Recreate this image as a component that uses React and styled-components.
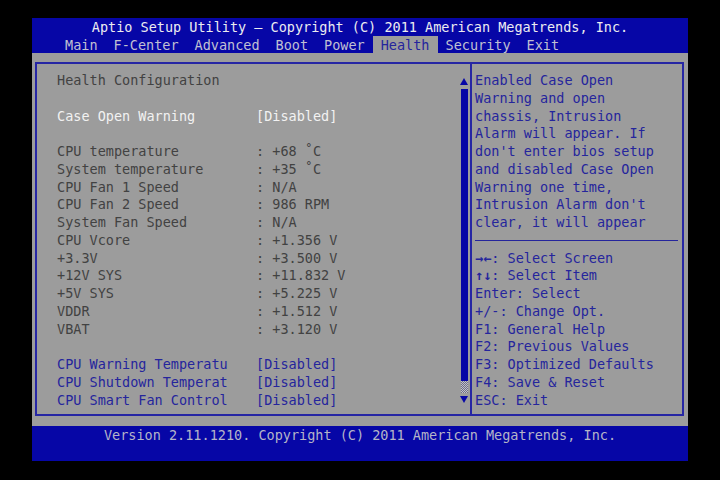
import React from 'react';
import styled, { createGlobalStyle } from 'styled-components';

const GlobalStyle = createGlobalStyle`
  html, body {
    margin: 0;
    padding: 0;
    background: #000;
  }
  body {
    width: 720px;
    height: 480px;
    overflow: hidden;
    font-family: "DejaVu Sans Mono", "Liberation Mono", monospace;
    font-size: 13.5px;
  }
`;

const BLUE = '#0606a6';
const GRAY = '#9c9c9c';
const INK = '#424242';
const NAVY = '#25259c';

const menu = ['Main', 'F-Center', 'Advanced', 'Boot', 'Power', 'Health', 'Security', 'Exit'];

const readings = [
  ['CPU temperature', '+68 ˚C'],
  ['System temperature', '+35 ˚C'],
  ['CPU Fan 1 Speed', 'N/A'],
  ['CPU Fan 2 Speed', '986 RPM'],
  ['System Fan Speed', 'N/A'],
  ['CPU Vcore', '+1.356 V'],
  ['+3.3V', '+3.500 V'],
  ['+12V SYS', '+11.832 V'],
  ['+5V SYS', '+5.225 V'],
  ['VDDR', '+1.512 V'],
  ['VBAT', '+3.120 V'],
];

const options = ['CPU Warning Temperatu', 'CPU Shutdown Temperat', 'CPU Smart Fan Control'];

const helpText = [
  'Enabled Case Open',
  'Warning and open',
  'chassis, Intrusion',
  'Alarm will appear. If',
  "don't enter bios setup",
  'and disabled Case Open',
  'Warning one time,',
  "Intrusion Alarm don't",
  'clear, it will appear',
];

const keys = [
  ['→←', ': Select Screen'],
  ['↑↓', ': Select Item'],
  ['', 'Enter: Select'],
  ['', '+/-: Change Opt.'],
  ['', 'F1: General Help'],
  ['', 'F2: Previous Values'],
  ['', 'F3: Optimized Defaults'],
  ['', 'F4: Save & Reset'],
  ['', 'ESC: Exit'],
];

function App() {
  return (
    <>
      <GlobalStyle />
      <Screen>
        <Header>
          <Title>Aptio Setup Utility – Copyright (C) 2011 American Megatrends, Inc.</Title>
          <Menu>
            {menu.map(m => (
              <Tab key={m} active={m === 'Health'}>{m}</Tab>
            ))}
          </Menu>
        </Header>
        <Body>
          <Panels>
            <MainPanel>
              <Content>
                <Row><Label>Health Configuration</Label></Row>
                <Blank />
                <Row tone="white"><Label>Case Open Warning</Label><Value>[Disabled]</Value></Row>
                <Blank />
                {readings.map(([k, v]) => (
                  <Row key={k}><Label>{k}</Label><Value>: {v}</Value></Row>
                ))}
                <Blank />
                {options.map(o => (
                  <Row key={o} tone="blue"><Label>{o}</Label><Value>[Disabled]</Value></Row>
                ))}
              </Content>
              <ScrollBar>
                <Arrow viewBox="0 0 8 7"><polygon points="4,0 8,7 0,7" /></Arrow>
                <Track>
                  <Thumb />
                  <Dither />
                </Track>
                <Arrow viewBox="0 0 8 7"><polygon points="0,0 8,0 4,7" /></Arrow>
              </ScrollBar>
            </MainPanel>
            <HelpPanel>
              {helpText.map(t => <HelpLine key={t}>{t}</HelpLine>)}
              <Divider />
              {keys.map(([k, t]) => (
                <HelpLine key={t}>{k && <KeyGlyph>{k}</KeyGlyph>}{t}</HelpLine>
              ))}
            </HelpPanel>
          </Panels>
        </Body>
        <Footer>Version 2.11.1210. Copyright (C) 2011 American Megatrends, Inc.</Footer>
      </Screen>
    </>
  );
}

export default App;

const Screen = styled.div`
  margin: 18px 0 0 32px;
  width: 656px;
  height: 443px;
  display: flex;
  flex-direction: column;
`;

const Header = styled.div`
  background: ${BLUE};
  height: 35px;
  display: flex;
  flex-direction: column;
`;

const Title = styled.div`
  height: 18px;
  line-height: 19px;
  text-align: center;
  color: #ececf0;
  white-space: pre;
`;

const Menu = styled.div`
  height: 17px;
  display: flex;
  padding-left: 25px;
`;

const Tab = styled.div`
  line-height: 18px;
  padding: 0 8px;
  white-space: pre;
  color: ${p => (p.active ? NAVY : '#c0c0d2')};
  background: ${p => (p.active ? GRAY : 'transparent')};
`;

const Body = styled.div`
  background: ${GRAY};
  height: 373px;
  padding: 9px 4px 10px 3px;
  box-sizing: border-box;
`;

const Panels = styled.div`
  height: 354px;
  box-sizing: border-box;
  border: 2px solid #2626a4;
  display: flex;
`;

const MainPanel = styled.div`
  width: 433px;
  border-right: 2px solid #2626a4;
  display: flex;
`;

const Content = styled.div`
  flex: 1;
  padding: 8px 0 0 20px;
`;

const Row = styled.div`
  height: 17.75px;
  line-height: 17.75px;
  display: grid;
  grid-template-columns: 199px 1fr;
  white-space: pre;
  color: ${p => (p.tone === 'white' ? '#f2f2f2' : p.tone === 'blue' ? NAVY : INK)};
`;

const Blank = styled.div`
  height: 17.75px;
`;

const Label = styled.span``;
const Value = styled.span``;

const ScrollBar = styled.div`
  width: 8px;
  margin-right: 2px;
  padding-top: 14px;
  display: flex;
  flex-direction: column;
  align-items: center;
`;

const Arrow = styled.svg`
  width: 8px;
  height: 7px;
  fill: ${BLUE};
  flex: none;
`;

const Track = styled.div`
  width: 7px;
  height: 304px;
  margin: 4px 0 3px;
  display: flex;
  flex-direction: column;
`;

const Thumb = styled.div`
  flex: 1;
  background: ${BLUE};
`;

const Dither = styled.div`
  height: 12px;
  background: repeating-conic-gradient(#6c6c8c 0 25%, #c4c4c4 0 50%) 0 0 / 2px 2px;
`;

const HelpPanel = styled.div`
  flex: 1;
  padding: 8px 0 0 3px;
  color: ${NAVY};
`;

const HelpLine = styled.div`
  height: 17.75px;
  line-height: 17.75px;
  white-space: pre;
`;

const KeyGlyph = styled.span`
  font-weight: bold;
`;

const Divider = styled.div`
  height: 17.75px;
  margin-right: 4px;
  display: flex;
  align-items: center;
  &::after {
    content: '';
    flex: 1;
    border-top: 1px solid ${NAVY};
  }
`;

const Footer = styled.div`
  background: ${BLUE};
  flex: 1;
  line-height: 18px;
  text-align: center;
  color: #b4b4c8;
  white-space: pre;
`;
